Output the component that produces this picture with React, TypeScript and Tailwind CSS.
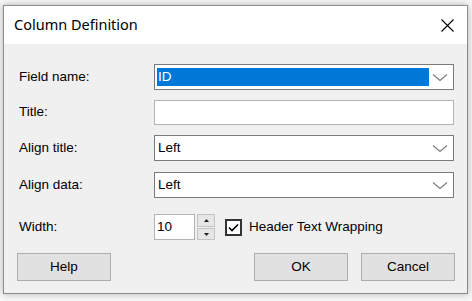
import { useState } from "react";

const ui = { fontFamily: '"Liberation Sans", Arial, sans-serif' };

function Chevron() {
  return (
    <svg width="16" height="9" viewBox="0 0 16 9" className="block">
      <path d="M1 1.5 L8 7.5 L15 1.5" fill="none" stroke="#7a7a7a" strokeWidth="1.1" />
    </svg>
  );
}

function Combo({ value, selected }: { value: string; selected?: boolean }) {
  return (
    <div className="flex h-[26px] w-[300px] items-center border border-[#7a7a7a] bg-white">
      <div className="flex h-full flex-1 items-center py-[3px] pl-[2px]">
        <div
          className={`flex h-[18px] w-full items-center pl-[1px] ${
            selected ? "bg-[#0078d7] text-white" : "text-black"
          }`}
        >
          {value}
        </div>
      </div>
      <div className="flex h-full w-[24px] items-center justify-center pr-[2px]">
        <Chevron />
      </div>
    </div>
  );
}

function Row({ label, className, children }: { label: string; className?: string; children: React.ReactNode }) {
  return (
    <div className={`flex items-center ${className ?? ""}`}>
      <div className="w-[135px] text-black">{label}</div>
      {children}
    </div>
  );
}

function Button({ label, className }: { label: string; className?: string }) {
  return (
    <button
      className={`flex h-[28px] w-[94px] items-center justify-center border border-[#adadad] bg-[#e1e1e1] text-black ${className ?? ""}`}
    >
      {label}
    </button>
  );
}

export default function App() {
  const [wrap, setWrap] = useState(true);

  return (
    <div className="h-[301px] w-[472px] bg-[#f7f7f7] pl-[3px] pt-[5px]" style={ui}>
      <div className="flex h-[289px] w-[465px] flex-col border border-[#8c8c8c] shadow-[0_0_7px_rgba(0,0,0,0.28)]">
        <div className="flex h-[38px] items-center justify-between bg-white pl-[10px] pr-[13px]">
          <span className="text-[14.5px] text-black" style={{ fontFamily: '"Noto Sans", "Open Sans", sans-serif' }}>
            Column Definition
          </span>
          <svg width="13" height="13" viewBox="0 0 13 13" className="block">
            <path d="M0.5 0.5 L12.5 12.5 M12.5 0.5 L0.5 12.5" stroke="#000" strokeWidth="1.1" />
          </svg>
        </div>

        <div className="flex flex-1 flex-col bg-[#f0f0f0] pl-[15px] pt-[20px] text-[13.5px]">
          <Row label="Field name:">
            <Combo value="ID" selected />
          </Row>
          <Row label="Title:" className="mt-[10px]">
            <div className="h-[25px] w-[300px] border border-[#b4b4b4] bg-white" />
          </Row>
          <Row label="Align title:" className="mt-[10px]">
            <Combo value="Left" />
          </Row>
          <Row label="Align data:" className="mt-[11px]">
            <Combo value="Left" />
          </Row>
          <Row label="Width:" className="mt-[16px]">
            <div className="flex h-[26px] w-[41px] items-center border border-[#b4b4b4] bg-white pl-[2px]">10</div>
            <div className="ml-[2px] flex h-[26px] w-[18px] flex-col justify-between">
              <div className="flex h-[13px] items-center justify-center border border-[#c4c4c4] bg-[#e6e6e6]">
                <svg width="5" height="3" viewBox="0 0 5 3" className="block">
                  <path d="M0 3 L2.5 0 L5 3 Z" fill="#202020" />
                </svg>
              </div>
              <div className="flex h-[12px] items-center justify-center border border-[#c4c4c4] bg-[#e6e6e6]">
                <svg width="5" height="3" viewBox="0 0 5 3" className="block">
                  <path d="M0 0 L5 0 L2.5 3 Z" fill="#202020" />
                </svg>
              </div>
            </div>
            <label className="ml-[10px] flex cursor-default items-center" onClick={() => setWrap(!wrap)}>
              <span className="flex h-[17px] w-[17px] items-center justify-center border-2 border-[#333333] bg-white">
                {wrap && (
                  <svg width="11" height="9" viewBox="0 0 11 9" className="block">
                    <path d="M1 4.5 L4 7.5 L10 1.5" fill="none" stroke="#000" strokeWidth="1.6" />
                  </svg>
                )}
              </span>
              <span className="ml-[7px] text-black">Header Text Wrapping</span>
            </label>
          </Row>
          <div className="-ml-[2px] mt-[13px] flex items-center pr-[12px]">
            <Button label="Help" />
            <div className="flex-1" />
            <Button label="OK" />
            <Button label="Cancel" className="ml-[13px]" />
          </div>
        </div>
      </div>
    </div>
  );
}
